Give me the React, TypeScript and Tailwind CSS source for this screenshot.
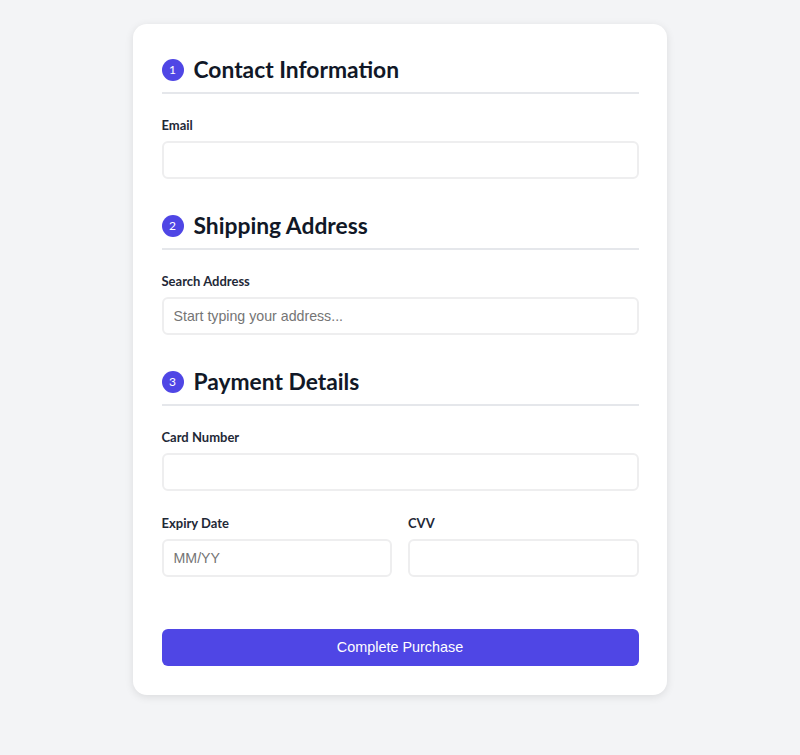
import React from "react";

function Heading({ n, title }: { n: number; title: string }) {
  return (
    <div className="flex items-center gap-[10px] pb-[10px] border-b-2 border-[#e5e7eb]">
      <span className="flex h-[22px] w-[22px] items-center justify-center rounded-full bg-[#4f46e5] text-[12px] leading-none text-white">
        {n}
      </span>
      <h2 className="text-[22.8px] font-bold leading-[25px] text-[#111827]">{title}</h2>
    </div>
  );
}

function Field({ label, placeholder }: { label: string; placeholder?: string }) {
  return (
    <div className="flex flex-col">
      <label className="text-[13px] font-bold leading-[20px] text-[#1f2937] mb-[6px]">{label}</label>
      <input
        placeholder={placeholder}
        className="h-[38px] w-full rounded-[6px] border-2 border-[#eeeeef] bg-white px-[10px] text-[14.2px] text-[#111827] outline-none placeholder:text-[#757575]"
        style={{ fontFamily: '"Liberation Sans", Arial, sans-serif' }}
      />
    </div>
  );
}

export default function App() {
  return (
    <div className="min-h-[755px] bg-[#f3f4f6] pt-[24px]" style={{ fontFamily: 'Lato, "Noto Sans", sans-serif' }}>
      <div className="mx-auto w-[534px] rounded-[14px] bg-white px-[28.5px] pt-[33px] pb-[29px] shadow-[0_2px_8px_rgba(0,0,0,0.1)]">
        <div className="flex flex-col">
          <Heading n={1} title="Contact Information" />
          <div className="mt-[21px]">
            <Field label="Email" />
          </div>
          <div className="mt-[34px]">
            <Heading n={2} title="Shipping Address" />
          </div>
          <div className="mt-[21px]">
            <Field label="Search Address" placeholder="Start typing your address..." />
          </div>
          <div className="mt-[34px]">
            <Heading n={3} title="Payment Details" />
          </div>
          <div className="mt-[21px]">
            <Field label="Card Number" />
          </div>
          <div className="mt-[22px] grid grid-cols-2 gap-[16px]">
            <Field label="Expiry Date" placeholder="MM/YY" />
            <Field label="CVV" />
          </div>
          <button
            className="mt-[52px] h-[37px] w-full rounded-[6px] bg-[#4f46e5] text-[14.4px] text-white"
            style={{ fontFamily: '"Liberation Sans", Arial, sans-serif' }}
          >
            Complete Purchase
          </button>
        </div>
      </div>
    </div>
  );
}
